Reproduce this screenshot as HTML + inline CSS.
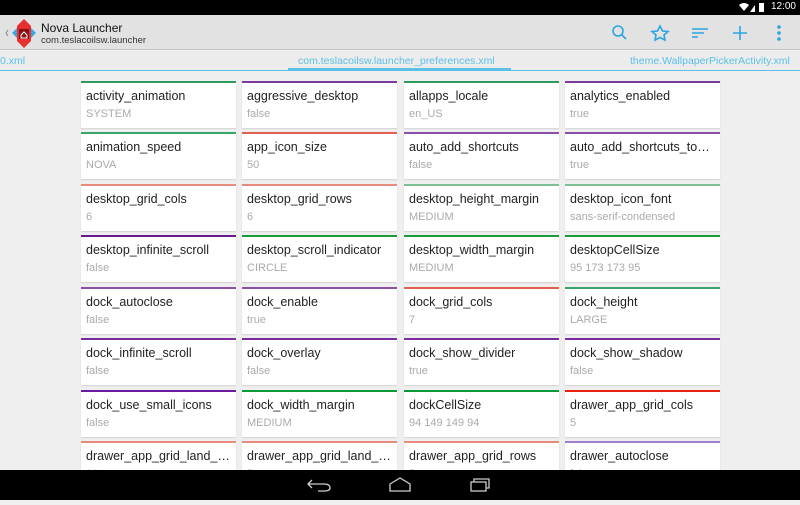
<!DOCTYPE html>
<html><head><meta charset="utf-8"><style>
*{margin:0;padding:0;box-sizing:border-box}
body{width:800px;height:500px;overflow:hidden;background:#efefef;font-family:"Liberation Sans",sans-serif;position:relative}
.sb{position:absolute;left:0;top:0;width:800px;height:15px;background:#000;color:#fff;font-size:10px}
.ab{position:absolute;left:0;top:15px;width:800px;height:35px;background:#e2e2e2;border-bottom:1px solid #c8c8c8}
.tabs{position:absolute;left:0;top:51px;width:800px;height:20px;background:#ececec;border-bottom:1px solid #5bc0e8;font-size:10.5px;color:#5bc0e8}
.card{position:absolute;width:155px;height:47px;background:#fff;border-top:2px solid;box-shadow:0 1px 1px rgba(0,0,0,.12)}
.k{position:absolute;left:5px;top:6px;font-size:12.5px;color:#222;white-space:nowrap;width:146px;overflow:hidden;text-overflow:ellipsis}
.v{position:absolute;left:5px;top:25px;font-size:11px;color:#aaa}
.nb{position:absolute;left:0;top:470px;width:800px;height:30px;background:#000}
</style></head><body>
<div class="sb"><span style="position:absolute;right:4px;top:1px">12:00</span>
<svg style="position:absolute;left:738px;top:2px" width="34" height="11"><path d="M1 3 Q6 -1 11 3 L6 9Z" fill="#fff"/><path d="M12 10 L17 3 L17 10Z" fill="#fff"/><rect x="21" y="1" width="5" height="9" fill="#fff"/></svg></div>
<div class="ab">
<svg style="position:absolute;left:2px;top:2px" width="40" height="32"><path d="M6 13 L4 16 L6 19" stroke="#888" fill="none"/><path d="M10 16 L16 10 L16 22Z" fill="#3aa6e0"/><path d="M34 16 L28 10 L28 22Z" fill="#3aa6e0"/><path d="M22 2 L29 9 L29 24 L22 31 L15 24 L15 9Z" fill="#e53030"/><rect x="17" y="12" width="10" height="10" fill="#8a1010"/><path d="M19 18 L22 15 L25 18 L25 21 L19 21Z" fill="none" stroke="#fff"/></svg>
<div style="position:absolute;left:41px;top:6px;font-size:12px;color:#111">Nova Launcher</div>
<div style="position:absolute;left:41px;top:20px;font-size:9.5px;color:#333">com.teslacoilsw.launcher</div>
<svg style="position:absolute;left:610px;top:9px" width="180" height="18" fill="none" stroke="#2aa5e0" stroke-width="1.6">
<circle cx="8" cy="7" r="5"/><path d="M12 11 L16 15"/>
<path d="M50 2 L52.5 7 L58 7.5 L54 11 L55 16 L50 13.5 L45 16 L46 11 L42 7.5 L47.5 7Z"/>
<path d="M82 5 H98 M82 9 H94 M82 13 H88"/>
<path d="M130 2 V16 M123 9 H137"/>
<circle cx="169" cy="3" r="1" fill="#2aa5e0"/><circle cx="169" cy="9" r="1" fill="#2aa5e0"/><circle cx="169" cy="15" r="1" fill="#2aa5e0"/></svg>
</div>
<div class="tabs"><span style="position:absolute;left:0;top:4px">0.xml</span>
<span style="position:absolute;left:298px;top:4px">com.teslacoilsw.launcher_preferences.xml</span>
<div style="position:absolute;left:288px;top:17px;width:223px;height:2px;background:#5bc0e8"></div>
<span style="position:absolute;left:630px;top:4px">theme.WallpaperPickerActivity.xml</span></div>
<div id="g"></div>
<div class="nb"><svg width="800" height="30" fill="none" stroke="#ccc" stroke-width="1.3">
<path d="M312 10 L308 14 L312 18 M308 14 H324 Q330 14 330 18 Q330 21 324 21 H318"/>
<path d="M390 14 L400 8 L410 14 V21 H390Z"/>
<rect x="471" y="12" width="15" height="9"/><path d="M474 12 V9 H489 V18 H486"/></svg></div>
<script>
var d=[["activity_animation","SYSTEM","#2e9a5e"],["aggressive_desktop","false","#7b3b9e"],["allapps_locale","en_US","#2e9a5e"],["analytics_enabled","true","#7b3b9e"],
["animation_speed","NOVA","#3aa56a"],["app_icon_size","50","#e06050"],["auto_add_shortcuts","false","#8a50a8"],["auto_add_shortcuts_to_screen","true","#8a50a8"],
["desktop_grid_cols","6","#e88a7e"],["desktop_grid_rows","6","#e88a7e"],["desktop_height_margin","MEDIUM","#7cc093"],["desktop_icon_font","sans-serif-condensed","#7cc093"],
["desktop_infinite_scroll","false","#6a1a8e"],["desktop_scroll_indicator","CIRCLE","#1a9a3a"],["desktop_width_margin","MEDIUM","#1a9a3a"],["desktopCellSize","95 173 173 95","#1a9a3a"],
["dock_autoclose","false","#8a50a8"],["dock_enable","true","#8a50a8"],["dock_grid_cols","7","#e06050"],["dock_height","LARGE","#3aa56a"],
["dock_infinite_scroll","false","#7b2ba0"],["dock_overlay","false","#7b2ba0"],["dock_show_divider","true","#7b2ba0"],["dock_show_shadow","false","#7b2ba0"],
["dock_use_small_icons","false","#6a1a9e"],["dock_width_margin","MEDIUM","#0a9a3a"],["dockCellSize","94 149 149 94","#0a9a3a"],["drawer_app_grid_cols","5","#e82010"],
["drawer_app_grid_land_cols","10","#e88a7e"],["drawer_app_grid_land_rows","5","#e88a7e"],["drawer_app_grid_rows","5","#e88a7e"],["drawer_autoclose","false","#a080c8"]];
var xs=[81,242,404,565],tops=[81,132,184,235,287,338,390,441],h="";
d.forEach(function(c,i){h+='<div class="card" style="left:'+xs[i%4]+'px;top:'+tops[Math.floor(i/4)]+'px;border-color:'+c[2]+'"><div class="k">'+c[0]+'</div><div class="v">'+c[1]+'</div></div>';});
document.getElementById("g").innerHTML=h;
</script>
</body></html>
